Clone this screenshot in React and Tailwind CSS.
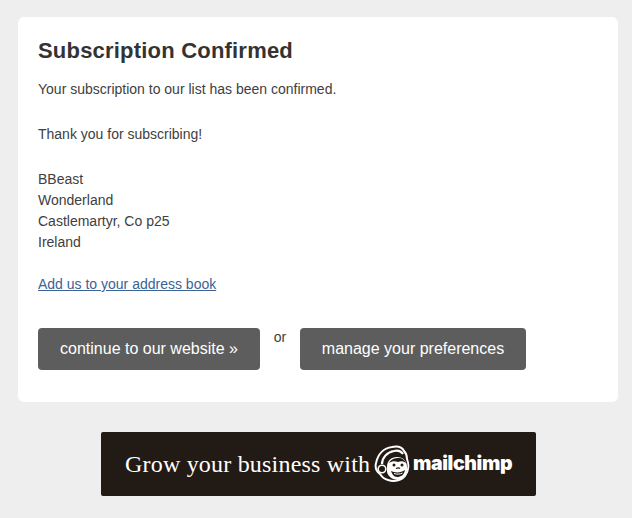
export default function App() {
  return (
    <div className="min-h-[518px] bg-[#eeeeee] px-[18px] pt-[17px] font-['Liberation_Sans',Arial,sans-serif] text-[14px] leading-[21px] text-[#404040] overflow-hidden">
      {/* Card */}
      <div className="w-[600px] h-[385px] rounded-[6px] bg-white px-5 pt-5">
        <h1 className="text-[22px] leading-[27px] font-bold tracking-[0.2px] text-[#333333]">Subscription Confirmed</h1>
        <p className="mt-[15px]">Your subscription to our list has been confirmed.</p>
        <p className="mt-6">Thank you for subscribing!</p>
        <p className="mt-6">
          BBeast<br />
          Wonderland<br />
          Castlemartyr, Co p25<br />
          Ireland
        </p>
        <p className="mt-[21px]">
          <a href="#" className="text-[#3b6394] underline">Add us to your address book</a>
        </p>
        <div className="mt-[33px] flex items-start">
          <a href="#" className="flex h-[42px] w-[222px] items-center justify-center rounded-[4px] bg-[#5d5d5d] pb-[2px] text-[16px] text-white">
            continue to our website »
          </a>
          <span className="w-10 text-center leading-[19px]">or</span>
          <a href="#" className="flex h-[42px] w-[226px] items-center justify-center rounded-[4px] bg-[#5d5d5d] pb-[2px] text-[16px] text-white">
            manage your preferences
          </a>
        </div>
      </div>

      {/* Mailchimp banner */}
      <div className="ml-[83px] mt-[30px] flex h-[64px] w-[435px] items-center rounded-[2px] bg-[#221a14] pl-6 text-white">
        <span className="w-[249px] font-['Liberation_Serif',serif] text-[24px] leading-none tracking-[0.2px]">Grow your business with</span>
        <svg viewBox="0 0 36 38" className="h-[38px] w-[36px]" fill="none" stroke="#ffffff">
          {/* head outline */}
          <path d="M6 29C2 26 1 22 2 18C4 9 10 3 18 2C23 1 28 2 30 6C32 8 33 11 33 14C35 19 35 26 31 31C27 36 20 37 14 35C10 34 8 32 6 29Z" fill="#221a14" strokeWidth="2" />
          {/* cap band */}
          <path d="M8 19C8 13 13 7 20 6C24 5 27 6 29 9" strokeWidth="2.2" />
          {/* face */}
          <path d="M13 22C13 16 17 12 23 12C29 12 33 16 33 22C34 28 30 34 24 35C18 35 14 31 13 27Z" fill="#ffffff" stroke="none" />
          {/* hair */}
          <path d="M15 18C17 14 21 13 25 13C28 13 31 15 32 18C29 16 27 16 24 17C21 16 18 16 15 18Z" fill="#221a14" stroke="none" />
          {/* ear */}
          <circle cx="8" cy="24" r="3.8" fill="#221a14" strokeWidth="1.6" />
          {/* eyes */}
          <circle cx="20" cy="20" r="1.5" fill="#221a14" stroke="none" />
          <circle cx="28" cy="20" r="1.5" fill="#221a14" stroke="none" />
          {/* nose and mouth */}
          <path d="M22 23.5C23.5 22.8 25 22.8 26 23.5" stroke="#221a14" strokeWidth="1.2" />
          <path d="M17 26C21 28 27 28 31 25C30 30 27 32 23 32C20 32 18 29 17 26Z" fill="#221a14" stroke="none" />
          <path d="M20 28.5C23 29.5 26 29.3 28.5 28" stroke="#ffffff" strokeWidth="1" />
        </svg>
        <span className="ml-[3px] font-['Inter',sans-serif] text-[19.5px] font-black leading-none tracking-[-0.4px]">mailchimp</span>
      </div>
    </div>
  );
}
